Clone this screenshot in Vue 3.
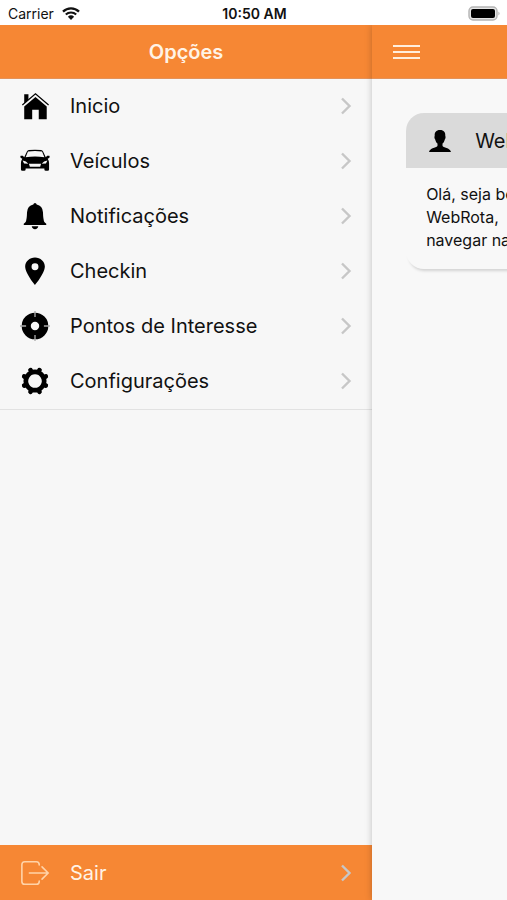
<template>
  <div class="app">
    <div class="status-bar">
      <div class="carrier">
        <span>Carrier</span>
        <svg width="18" height="13" viewBox="0 0 18 13" aria-hidden="true">
          <path d="M1 4.6a11.5 11.5 0 0 1 16 0" fill="none" stroke="#111" stroke-width="2.3" />
          <path d="M3.8 7.6a7.5 7.5 0 0 1 10.4 0" fill="none" stroke="#111" stroke-width="2.1" />
          <path d="M9 13 5.9 9.7a4.5 4.5 0 0 1 6.2 0z" fill="#111" />
        </svg>
      </div>
      <strong class="clock">10:50 AM</strong>
      <div class="battery">
        <svg width="33" height="15" viewBox="0 0 33 15" aria-hidden="true">
          <rect x="1" y="1" width="28" height="13" rx="4" fill="#e6e6e6" stroke="#b4b4b4" stroke-width="1.4" />
          <rect x="3" y="3" width="24" height="9" rx="2" fill="#000" />
          <path d="M30.5 5.5q2 2 0 4z" fill="#a5a5a5" />
        </svg>
      </div>
    </div>

    <div class="screen">
      <aside class="menu">
        <header class="toolbar">
          <h1>Opções</h1>
        </header>

        <nav class="menu-list">
          <a v-for="item in items" :key="item.label" href="#" class="menu-item" @click.prevent="selected = item.label">
            <svg class="icon" viewBox="0 0 32 32" aria-hidden="true">
              <path v-if="item.icon" :d="item.icon" fill="currentColor" fill-rule="evenodd" />
              <path v-if="item.line" :d="item.line" fill="none" stroke="currentColor" stroke-width="1.3" />
              <path v-if="item.bold" :d="item.bold" class="bold" />
              <path v-if="item.ticks" :d="item.ticks" fill="none" stroke="#aaa" stroke-width="1.4" />
            </svg>
            <span>{{ item.label }}</span>
            <svg class="chevron" viewBox="0 0 12 18" aria-hidden="true">
              <path d="M2 1.5 9.5 9 2 16.5" />
            </svg>
          </a>
        </nav>

        <a href="#" class="menu-item logout" @click.prevent="selected = 'Sair'">
          <svg class="icon" viewBox="0 0 32 32" aria-hidden="true">
            <path class="exit" d="M20.5 7.500V7q0-3-3-3H5Q2 4 2 7v18q0 3 3 3h12.500q3 0 3-3v-.5M10 16h20M23.500 9.500 30 16l-6.500 6.500" />
          </svg>
          <span>Sair</span>
          <svg class="chevron" viewBox="0 0 12 18" aria-hidden="true">
            <path d="M2 1.5 9.5 9 2 16.5" />
          </svg>
        </a>
      </aside>

      <main class="page">
        <header class="toolbar page-toolbar">
          <button type="button" class="menu-toggle" aria-label="Menu">
            <span></span>
            <span></span>
            <span></span>
          </button>
        </header>

        <section class="card">
          <h2 class="card-header">
            <svg width="24" height="24" viewBox="0 0 24 24" aria-hidden="true">
              <path d="M12 1c4 0 5.600 2.500 5.300 6 .6.500.2 3-.5 3.400-.4 2-1.300 3.200-2.300 4.200v2.200c.5 1.900 7.500 1.900 8.500 6.200H1c1-4.300 8-4.300 8.500-6.200v-2.200c-1-1-1.900-2.200-2.300-4.200-.7-.4-1.100-2.900-.5-3.400C6.400 3.500 8 1 12 1z" />
            </svg>
            <span>WebRota</span>
          </h2>
          <p class="card-content">
            Olá, seja bem vindo<br />
            WebRota,<br />
            navegar na
          </p>
        </section>
      </main>
    </div>
  </div>
</template>

<script setup>
import { ref } from 'vue';

const selected = ref('Inicio');

const items = [
  {
    label: 'Inicio',
    icon: 'M4.500 16.500 16.500 6.500 28.500 16.500V30H20V20h-7v10H4.500zM4.500 3.500h4.500v5.500l-4.500 4z',
    line: 'M2.500 15 16.500 3 30.500 15',
  },
  {
    label: 'Veículos',
    icon: 'M7.500 5.500Q8 4.500 9.500 4.300q6.500-.8 13 0 1.500.2 2 1.200l3 6.500 1.500-1.500h2.300q1 1.500-.3 2.300l-1.500.7q1.500 2 1.500 5V25q0 1.500-1.500 1.500h-2Q26 26.500 26 25v-1H6v1q0 1.500-1.500 1.500h-2Q1 26.500 1 25v-6.500q0-3 1.500-5L1 12.800Q-.3 12 .7 10.500H3L4.500 12zM8.500 5.800 6 12q10-1.500 20 0L23.500 5.800q-7.500-1-15 0zM2.800 15.500l1.500 3.200 4.500.3q-2-3-6-3.500zM29.200 15.500l-1.500 3.200-4.500.3q2-3 6-3.500zM9.500 18.800l1 3.200h11l1-3.200z',
  },
  {
    label: 'Notificações',
    icon: 'M16 2q1.500 0 1.800 1.800Q24 5 24.500 12q.2 8 1.500 10.500.5 1 2 1.700V25.500H4v-1.300q1.500-.7 2-1.700Q7.300 20 7.500 12 8 5 14.200 3.800 14.500 2 16 2zM12.500 27h7q-.5 3-3.500 3t-3.500-3z',
  },
  {
    label: 'Checkin',
    icon: 'M16 1.500c5.800 0 10.500 4.200 10.500 9.800C26.500 18.500 16 31 16 31S5.500 18.500 5.500 11.300C5.500 5.700 10.200 1.500 16 1.500zM16 7.800a3.700 3.700 0 1 0 0 7.400 3.700 3.700 0 0 0 0-7.400z',
  },
  {
    label: 'Pontos de Interesse',
    icon: 'M16 1.800a14.200 14.200 0 1 1 0 28.400 14.200 14.200 0 0 1 0-28.400zM16 11.500a4.500 4.500 0 1 0 0 9 4.500 4.500 0 0 0 0-9z',
    ticks: 'M16 0v6.500M16 25.500v6.500M0 16h6.500M25.500 16h6.500',
  },
  {
    label: 'Configurações',
    bold: 'M16 6.300a9.700 9.700 0 1 0 .01 0zM25.200 19.800l2.300 1M25.200 12.200l2.300-1M6.800 19.800l-2.300 1M6.800 12.200l-2.300-1M19.800 6.800l1-2.300M12.200 6.800l-1-2.300M19.800 25.200l1 2.300M12.200 25.200l-1 2.300',
  },
];
</script>

<style>
body {
  background: #f7f7f7;
}
</style>

<style scoped>
.app {
  display: flex;
  flex-direction: column;
  min-height: 100vh;
  overflow: hidden;
  background: #f7f7f7;
  color: #111;
  font-family: Inter, "Liberation Sans", sans-serif;
}

.status-bar {
  display: grid;
  grid-template-columns: 1fr auto 1fr;
  align-items: center;
  height: 25px;
  padding: 2px 6px 0 8px;
  box-sizing: border-box;
  background: #fff;
  font-size: 14px;
}

.carrier {
  display: flex;
  align-items: center;
  gap: 8px;
}

.clock {
  font-weight: 600;
}

.battery {
  display: flex;
  justify-content: flex-end;
}

.screen {
  display: flex;
  flex: 1;
  overflow: hidden;
}

.menu {
  display: flex;
  flex: 0 0 73.4%;
  flex-direction: column;
}

.toolbar {
  display: flex;
  align-items: center;
  justify-content: center;
  height: 54px;
  box-sizing: border-box;
  border-bottom: 1px solid #e3925a;
  background: #f68734;
  color: #fff3e6;
}

.toolbar h1 {
  margin: 0;
  font-size: 20px;
  font-weight: 600;
}

.menu-list {
  border-bottom: 1px solid #e2e2e2;
}

.menu-item {
  display: flex;
  align-items: center;
  gap: 20px;
  height: 55px;
  padding: 0 20px;
  box-sizing: border-box;
  color: #111;
  font-size: 20px;
  text-decoration: none;
}

.menu-list .menu-item {
  padding-bottom: 2px;
}

.menu-item span {
  flex: 1;
}

.icon {
  width: 30px;
  height: 30px;
  overflow: visible;
  color: #000;
}

.bold {
  fill: none;
  stroke: #000;
  stroke-width: 5;
  stroke-linecap: round;
}

.chevron {
  width: 12px;
  height: 18px;
}

.chevron path {
  fill: none;
  stroke: #c7c7c7;
  stroke-width: 2.4;
}

.exit {
  fill: none;
  stroke: #ffd3a8;
  stroke-width: 1.7;
  stroke-linecap: round;
}

.logout {
  margin-top: auto;
  background: #f68734;
  color: #fff3e6;
}

.page {
  flex: 0 0 100%;
  background: #f8f8f8;
  box-shadow: 0 0 7px rgba(0, 0, 0, 0.22);
}

.page-toolbar {
  justify-content: flex-start;
  padding: 0 21px;
}

.menu-toggle {
  display: flex;
  flex-direction: column;
  gap: 4px;
  width: 27px;
  padding: 0;
  border: 0;
  background: none;
  cursor: pointer;
}

.menu-toggle span {
  height: 2px;
  background: #ffeedd;
}

.card {
  margin: 34px;
  border-radius: 18px;
  overflow: hidden;
  box-shadow: 0 5px 3px -3px rgba(0, 0, 0, 0.15);
}

.card-header {
  display: flex;
  align-items: center;
  gap: 23px;
  height: 55px;
  margin: 0;
  padding: 0 22px;
  background: #dadada;
  font-size: 20px;
  font-weight: 400;
}

.card-content {
  margin: 0;
  padding: 15px 20px 17px;
  font-size: 16px;
  line-height: 23px;
  white-space: nowrap;
}
</style>
